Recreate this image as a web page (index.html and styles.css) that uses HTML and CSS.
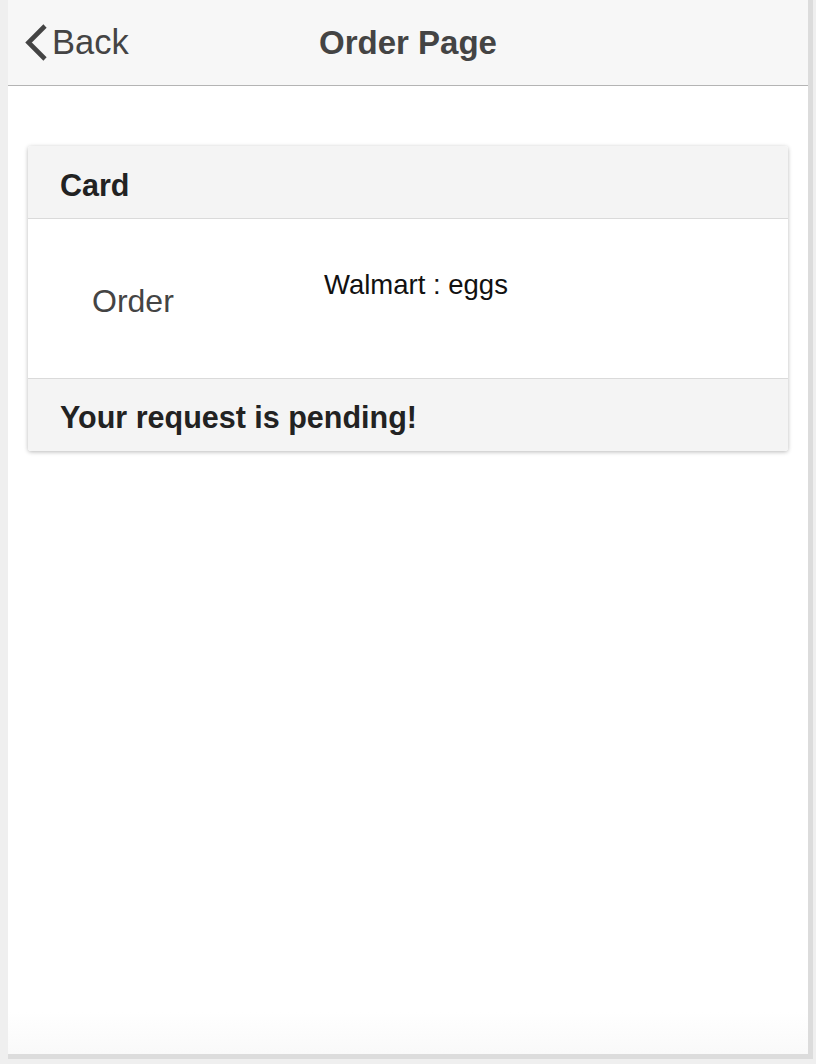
FILE: index.html
```html
<!DOCTYPE html>
<html lang="en">
    <head>
        <meta charset="UTF-8">
        <title>Order Page</title>
        <meta content="width=device-width" name="viewport">
        <link rel="stylesheet" href="styles.css">
    </head>
    <body>
        <div class="app">
            <header class="bar">
                <a class="back" href="#">
                    <svg viewBox="0 0 25 40">
                        <polyline points="21,3 4.5,19.5 21,36"></polyline>
                    </svg>
                    <span>Back</span>
                </a>
                <h1 class="title">Order Page</h1>
                <div></div>
            </header>
            <main class="content">
                <section class="card">
                    <div class="card-header">Card</div>
                    <div class="card-body">
                        <span class="label">Order</span>
                        <span class="value">Walmart : eggs</span>
                    </div>
                    <div class="card-footer">Your request is pending!</div>
                </section>
            </main>
        </div>
    </body>
</html>
```

FILE: styles.css
```css
* {
    padding: 0;
    margin: 0;
    box-sizing: border-box
}

body {
    background: #efefef;
    font-family: "Liberation Sans", Arial, sans-serif;
    color: #222
}

.app {
    margin-left: 8px;
    width: 805px;
    height: 1059px;
    border-right: 5px solid #dcdcdc;
    border-bottom: 5px solid #dcdcdc;
    background: linear-gradient(to bottom, #fff 96%, #f9f9f9);
    display: flex;
    flex-direction: column
}

.bar {
    height: 86px;
    background: #f7f7f7;
    border-bottom: 1px solid #b4b4b4;
    display: grid;
    grid-template-columns: 1fr auto 1fr;
    align-items: center
}

.back {
    display: flex;
    align-items: center;
    padding-left: 16px;
    color: #444;
    text-decoration: none;
    font-size: 34.5px
}

.back svg {
    width: 25px;
    height: 40px;
    margin-right: 3px;
    fill: none;
    stroke: #444;
    stroke-width: 4.6
}

.title {
    font-size: 33px;
    font-weight: 700;
    color: #444
}

.content {
    flex-grow: 1;
    padding: 60px 20px 0
}

.card {
    border-radius: 3px;
    box-shadow: 0 1px 4px rgba(0,0,0,.28);
    overflow: hidden
}

.card-header,
.card-footer {
    background: #f4f4f4;
    padding: 20px 32px 0;
    font-size: 30.5px;
    line-height: 36px;
    font-weight: 700;
    color: #222
}

.card-header {
    padding-top: 21px;
    height: 73px;
    border-bottom: 1px solid #dadada
}

.card-footer {
    height: 73px;
    border-top: 1px solid #dadada
}

.card-body {
    height: 159px;
    padding: 50px 0 0 64px;
    display: grid;
    grid-template-columns: 232px 1fr;
    align-items: start
}

.label {
    margin-top: 13px;
    font-size: 32px;
    line-height: 38px;
    color: #444
}

.value {
    font-size: 27.5px;
    line-height: 32px;
    color: #111
}
```
